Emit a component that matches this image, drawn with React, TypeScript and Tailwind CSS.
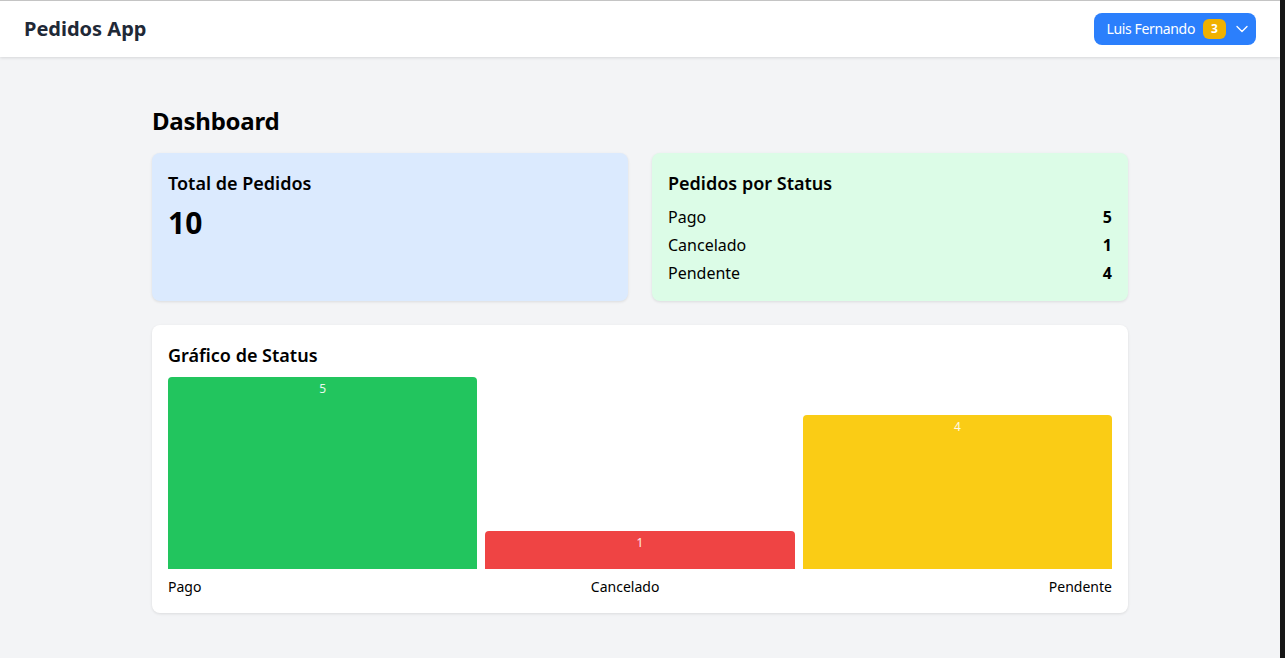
import { ChevronDown } from 'lucide-react';

const statusCounts = [
  { label: 'Pago', value: 5, color: 'bg-[#22c55e]' },
  { label: 'Cancelado', value: 1, color: 'bg-[#ef4444]' },
  { label: 'Pendente', value: 4, color: 'bg-[#facc15]' },
];

function Navbar() {
  return (
    <header className="h-14 bg-white shadow-[0_1px_3px_rgba(0,0,0,0.12)] relative z-10">
      <div className="h-full px-6 flex items-center justify-between">
        <h1 className="text-xl font-bold text-[#1f2937]">Pedidos App</h1>
        <button className="h-8 pl-3 pr-1 rounded-lg bg-[#2b7ffc] text-white text-sm flex items-center">
          <span className="tracking-[-0.025em]">Luis Fernando</span>
          <span className="ml-2 h-5 min-w-[23px] px-1.5 rounded-md bg-[#f0b100] text-xs font-bold flex items-center justify-center">
            3
          </span>
          <ChevronDown className="ml-1.5 w-5 h-5" strokeWidth={1.6} />
        </button>
      </div>
    </header>
  );
}

function Dashboard() {
  const total = statusCounts.reduce((acc, s) => acc + s.value, 0);
  const max = Math.max(...statusCounts.map((s) => s.value));

  return (
    <main className="max-w-5xl mx-auto px-6 pt-12 pb-8">
      <h2 className="text-2xl font-bold text-black mb-4 tracking-[-0.01em]">Dashboard</h2>

      <div className="grid grid-cols-2 gap-6">
        <div className="bg-[#dbeafe] rounded-lg p-4 shadow-[0_1px_3px_rgba(0,0,0,0.1)]">
          <h3 className="text-lg font-semibold mb-2">Total de Pedidos</h3>
          <p className="text-3xl font-bold">{total}</p>
        </div>
        <div className="bg-[#dcfce7] rounded-lg p-4 shadow-[0_1px_3px_rgba(0,0,0,0.1)]">
          <h3 className="text-lg font-semibold mb-2">Pedidos por Status</h3>
          <ul className="space-y-1">
            {statusCounts.map((s) => (
              <li key={s.label} className="flex justify-between">
                <span>{s.label}</span>
                <span className="font-bold">{s.value}</span>
              </li>
            ))}
          </ul>
        </div>
      </div>

      <div className="mt-6 bg-white rounded-lg p-4 shadow-[0_1px_3px_rgba(0,0,0,0.1)]">
        <h3 className="text-lg font-semibold mb-2">Gráfico de Status</h3>
        <div className="h-48 flex items-end gap-2">
          {statusCounts.map((s) => (
            <div
              key={s.label}
              className={`flex-1 rounded-t ${s.color} flex justify-center`}
              style={{ height: `${(s.value / max) * 100}%` }}
            >
              <span className="pt-1 text-xs text-white/90">{s.value}</span>
            </div>
          ))}
        </div>
        <div className="mt-2 flex justify-between text-sm">
          {statusCounts.map((s) => (
            <span key={s.label}>{s.label}</span>
          ))}
        </div>
      </div>
    </main>
  );
}

export default function App() {
  return (
    <div className="flex h-[658px] font-['Noto_Sans',sans-serif] text-black">
      <div className="flex-1 bg-[#f3f4f6] border-t border-[#c4c4c4] overflow-hidden">
        <Navbar />
        <Dashboard />
      </div>
      <div className="w-[5px] bg-[#161616]" />
    </div>
  );
}
